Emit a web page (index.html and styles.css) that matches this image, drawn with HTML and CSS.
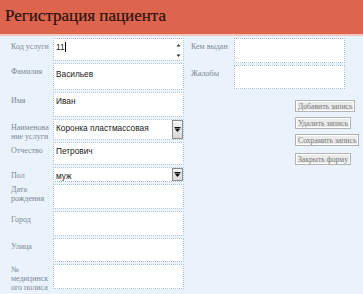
FILE: index.html
```html
<!DOCTYPE html>
<html lang="ru">
<head>
<meta charset="utf-8">
<title>Регистрация пациента</title>
<link rel="stylesheet" href="styles.css">
</head>
<body>
<header class="titlebar"><h1 class="title">Регистрация пациента</h1></header>
<div class="sep"></div>
<main class="form">
  <section class="col-left">
    <div class="row r25"><div class="lbl">Код услуги</div><div class="fld scroll"><span class="val">11<span class="caret"></span></span><span class="sb"><svg width="7" height="20" viewBox="0 0 7 20"><path d="M3.5 4 L1.5 6.5 H5.5 Z" fill="#333"/><path d="M3.5 17 L1.5 14.5 H5.5 Z" fill="#333"/></svg></span></div></div>
    <div class="row r29"><div class="lbl">Фамилия</div><div class="fld"><span class="val va5">Васильев</span></div></div>
    <div class="row r27"><div class="lbl">Имя</div><div class="fld"><span class="val">Иван</span></div></div>
    <div class="row r23"><div class="lbl">Наименова<wbr>ние услуги</div><div class="fld combo"><span class="val">Коронка пластмассовая</span><span class="dd"><svg width="7" height="6" viewBox="0 0 7 6"><path d="M0.5 1.5 H6.5 L3.5 5 Z" fill="#111"/><rect x="0.5" y="0" width="6" height="1" fill="#111"/></svg></span></div></div>
    <div class="row r25"><div class="lbl">Отчество</div><div class="fld"><span class="val">Петрович</span></div></div>
    <div class="row r17"><div class="lbl">Пол</div><div class="fld combo"><span class="val">муж</span><span class="dd"><svg width="7" height="6" viewBox="0 0 7 6"><path d="M0.5 1.5 H6.5 L3.5 5 Z" fill="#111"/><rect x="0.5" y="0" width="6" height="1" fill="#111"/></svg></span></div></div>
    <div class="row r27"><div class="lbl lbl-tight">Дата рождения</div><div class="fld"></div></div>
    <div class="row r27"><div class="lbl">Город</div><div class="fld"></div></div>
    <div class="row r26"><div class="lbl">Улица</div><div class="fld"></div></div>
    <div class="row r27"><div class="lbl lbl-tight">№ медицинск<wbr>ого полиса</div><div class="fld"></div></div>
  </section>
  <section class="col-right">
    <div class="row r27"><div class="lbl">Кем выдан</div><div class="fld"></div></div>
    <div class="row r26"><div class="lbl">Жалобы</div><div class="fld"></div></div>
    <div class="actions">
      <button class="btn">Добавить запись</button>
      <button class="btn">Удалить запись</button>
      <button class="btn">Сохранить запись</button>
      <button class="btn btn-last">Закрыть форму</button>
    </div>
  </section>
</main>
</body>
</html>
```
FILE: styles.css
```css
html, body {
  margin: 0;
  padding: 0;
  background: #eaf3fb;
  width: 363px;
  height: 294px;
  overflow: hidden;
}
.titlebar {
  height: 34px;
  background: #dd644d;
  display: flex;
  align-items: flex-start;
  padding-left: 5px;
}
.title {
  margin: 0;
  padding-top: 5px;
  font-family: "Liberation Serif", serif;
  font-weight: normal;
  font-size: 17px;
  line-height: 22px;
  color: #2a120e;
  -webkit-text-stroke: 0.2px #2a120e;
}
.sep {
  height: 2px;
  background: #f2c6bd;
}
.form {
  display: flex;
  padding-top: 2px;
}
.col-left {
  display: flex;
  flex-direction: column;
  padding-left: 11px;
  width: 173px;
}
.col-right {
  display: flex;
  flex-direction: column;
  padding-left: 7px;
}
.row {
  display: flex;
  align-items: stretch;
}
.r17 { height: 17px; }
.r23 { height: 23px; }
.r25 { height: 25px; }
.r26 { height: 26px; }
.r27 { height: 27px; }
.r29 { height: 29px; }
.lbl {
  width: 42px;
  flex: none;
  font-family: "Liberation Serif", serif;
  font-size: 8px;
  line-height: 9px;
  color: #7a8896;
  padding-top: 4px;
  box-sizing: border-box;
}
.lbl-tight { padding-top: 1px; }
.col-right .lbl { width: 43px; }
.fld {
  width: 131px;
  margin-bottom: 2px;
  background: #ffffff;
  border: 1px dotted #a8c2da;
  box-sizing: border-box;
  position: relative;
  font-family: "Liberation Sans", sans-serif;
  font-size: 8.3px;
  line-height: 11px;
  color: #1a1a1a;
}
.col-right .fld { width: 111px; }
.val {
  display: block;
  padding: 3px 0 0 2px;
  white-space: nowrap;
}
.va5 { padding-top: 5px; }
.caret {
  display: inline-block;
  width: 1px;
  height: 10px;
  background: #000;
  vertical-align: -2px;
}
.sb {
  position: absolute;
  right: 1px;
  top: 1px;
  width: 7px;
  height: 20px;
  display: flex;
}
.dd {
  position: absolute;
  right: 0;
  top: 0;
  bottom: 0;
  width: 11px;
  background: linear-gradient(#f4f4f4, #d9d9d9);
  border: 1px solid #8c8c8c;
  box-sizing: border-box;
  display: flex;
  align-items: center;
  justify-content: center;
}
.actions {
  display: flex;
  flex-direction: column;
  align-items: flex-start;
  gap: 5px;
  padding-left: 104px;
  padding-top: 9px;
}
.btn {
  font-family: "Liberation Serif", serif;
  font-size: 7.7px;
  line-height: 9px;
  color: #777777;
  background: #ebebeb;
  border: 1px solid #b3b3b3;
  box-shadow: inset 0 0 0 1px #ffffff;
  padding: 1px 2px;
  margin: 0;
  height: 12px;
  box-sizing: border-box;
}
.btn-last { margin-top: 2px; }
```
